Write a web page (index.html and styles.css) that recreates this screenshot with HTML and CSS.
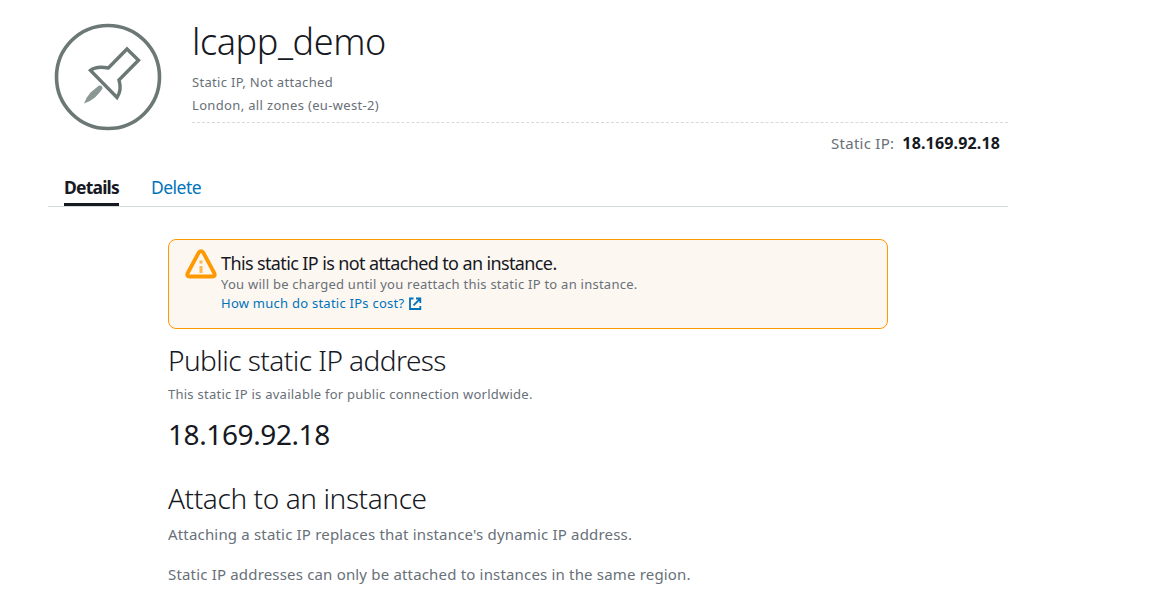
FILE: index.html
```html
<!DOCTYPE html>
<html lang="en">
<head>
<meta charset="utf-8">
<title>lcapp_demo</title>
<link rel="stylesheet" href="styles.css">
</head>
<body>
<main class="page">
  <header class="header">
    <svg class="resource-icon" viewBox="0 0 108 108" fill="none">
      <circle cx="54" cy="54" r="51.500" stroke="#6b7876" stroke-width="3.6"/>
      <path d="M73 26L84.500 37.200L65 57Q68 67 63 74.500L36.500 47.400Q42 42.800 54.400 45Z" stroke="#6b7876" stroke-width="3.4"/>
      <path d="M45 62.500Q49 62 48.300 66Q45.500 70 41 74.500Q37 78 30 80.500Q32.500 74 36.500 69.500Z" fill="#8a9795"/>
    </svg>
    <div class="summary">
      <h1 class="title">lcapp_demo</h1>
      <p class="meta">Static IP, Not attached</p>
      <p class="meta meta-zone">London, all zones (eu-west-2)</p>
      <p class="address"><span class="address-label">Static IP:</span><strong class="address-value">18.169.92.18</strong></p>
    </div>
  </header>
  <nav class="tabs">
    <a class="tab tab-active">Details</a>
    <a class="tab">Delete</a>
  </nav>
  <div class="content">
    <section class="alert">
      <svg class="alert-icon" viewBox="0 0 32 30" fill="none">
        <path d="M13.700 3.600Q16 0.500 18.300 3.600L29.500 24.500Q30.500 27.500 27.500 27.500H4.500Q1.500 27.500 2.500 24.500Z" stroke="#ff9900" stroke-width="3.800" stroke-linejoin="round"/>
        <path d="M16 11.500V14.500M16 17V24" stroke="#ffb84d" stroke-width="3"/>
      </svg>
      <div class="alert-body">
        <h3 class="alert-title">This static IP is not attached to an instance.</h3>
        <p class="alert-text">You will be charged until you reattach this static IP to an instance.</p>
        <a class="alert-link"><span>How much do static IPs cost?</span><svg class="external" viewBox="0 0 14 14" fill="none" stroke="#0073bb" stroke-width="1.800"><path d="M5.500 1.500H2V12H12.300V9M8 1.500H12.300V6M12 1.800L5.500 8.300"/></svg></a>
      </div>
    </section>
    <h2 class="heading heading-public">Public static IP address</h2>
    <p class="description">This static IP is available for public connection worldwide.</p>
    <p class="ip">18.169.92.18</p>
    <h2 class="heading heading-attach">Attach to an instance</h2>
    <p class="note">Attaching a static IP replaces that instance's dynamic IP address.</p>
    <p class="note note-region">Static IP addresses can only be attached to instances in the same region.</p>
  </div>
</main>
</body>
</html>
```
FILE: styles.css
```css
* { box-sizing: border-box; }
body { margin: 0; background: #fff; color: #16191f; font-family: "Noto Sans", sans-serif; overflow: hidden; white-space: nowrap; }
h1, h2, h3, p { margin: 0; }
.page { width: 960px; margin-left: 48px; }
.header { display: flex; height: 175px; padding-top: 20px; }
.resource-icon { width: 108px; height: 108px; margin: 3px 30px 0 6px; flex: none; }
.summary { flex: 1; }
.title { font-size: 36px; font-weight: 300; line-height: 44px; letter-spacing: -0.4px; margin-bottom: 7px; }
.meta { font-size: 13px; line-height: 23px; letter-spacing: 0.32px; color: #687078; }
.meta-zone { height: 29px; letter-spacing: 0.34px; border-bottom: 1px dashed #d5dbdb; }
.address { display: flex; justify-content: flex-end; gap: 8px; padding-right: 8px; margin-top: 8px; font-size: 16px; line-height: 24px; }
.address-label { font-size: 15px; letter-spacing: 0.27px; color: #687078; }
.address-value { letter-spacing: 0.15px; }
.tabs { display: flex; gap: 32px; height: 32px; padding-left: 16px; border-bottom: 1px solid #d5dbdb; }
.tab { height: 31px; font-size: 17.5px; line-height: 24px; letter-spacing: -0.53px; color: #0073bb; }
.tab-active { width: 55px; letter-spacing: -0.8px; color: #16191f; font-weight: 700; border-bottom: 3px solid #16191f; }
.content { width: 720px; margin: 32px 0 0 120px; }
.alert { display: flex; height: 90px; padding: 11px 16px; border: 1px solid #ff9900; border-radius: 8px; background: #fdf7f1; }
.alert-icon { width: 32px; height: 30px; margin-top: -2px; margin-right: 4px; flex: none; }
.alert-title { font-size: 18px; font-weight: 400; line-height: 24px; letter-spacing: -0.62px; }
.alert-text, .alert-link { font-size: 13px; line-height: 19px; letter-spacing: 0.25px; color: #687078; }
.alert-link { display: flex; align-items: center; gap: 4px; color: #0073bb; }
.external { width: 14px; height: 14px; }
.heading { font-size: 28px; font-weight: 300; line-height: 36px; letter-spacing: -0.55px; }
.heading-public { margin-top: 13px; }
.description { font-size: 13px; line-height: 20px; letter-spacing: 0.25px; margin-top: 6px; color: #687078; }
.ip { font-size: 28px; line-height: 36px; letter-spacing: -0.4px; margin-top: 12px; }
.heading-attach { margin-top: 28px; letter-spacing: -0.4px; }
.note { font-size: 15px; line-height: 24px; letter-spacing: 0.175px; margin-top: 6px; color: #687078; }
.note-region { margin-top: 16px; }
```
